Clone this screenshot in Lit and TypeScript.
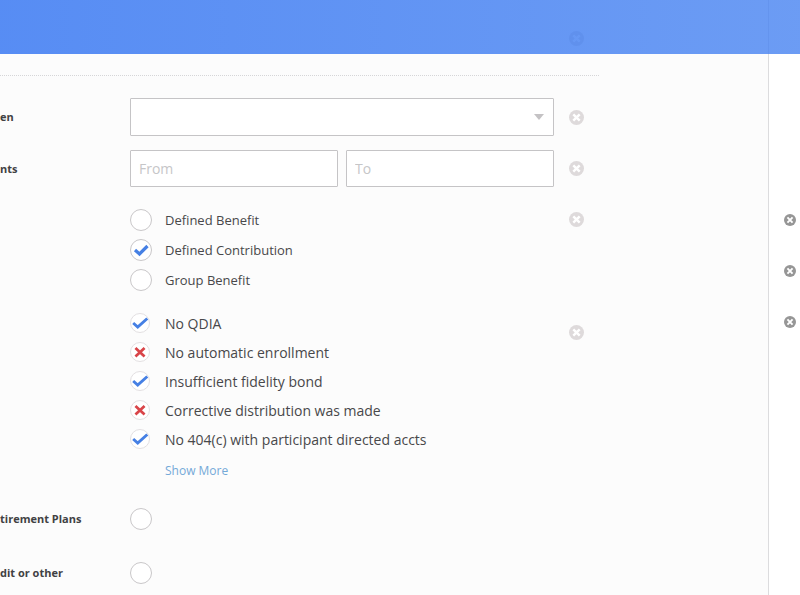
import { LitElement, html, css, svg } from "lit";
import { customElement, property } from "lit/decorators.js";

type Mark = "none" | "check" | "cross";

@customElement("clear-button")
class ClearButton extends LitElement {
  @property() label = "Clear";
  static styles = css`
    :host { display: block; width: 15px; height: 15px; color: #dedadb; }
    .btn { display: block; width: 100%; height: 100%; padding: 0; border: 0; background: none; color: inherit; cursor: pointer; }
    .icon { display: block; width: 100%; height: 100%; }
  `;
  render() {
    return html`<button class="btn" type="button" aria-label=${this.label}>
      <svg class="icon" viewBox="0 0 15 15" aria-hidden="true">
        <circle cx="7.5" cy="7.5" r="7.5" fill="currentColor" />
        <path d="M4.3 4.3l6.4 6.4M10.7 4.3l-6.4 6.4" stroke="#fff" stroke-width="2.4" />
      </svg>
    </button>`;
  }
}

@customElement("mark-option")
class MarkOption extends LitElement {
  @property() label = "";
  @property() name = "";
  @property() mark: Mark = "none";
  @property({ type: Boolean, reflect: true }) compact = false;
  static styles = css`
    :host { display: block; --size: 22px; font-size: 13px; }
    :host([compact]) { --size: 20px; --ring: #e3e0e2; font-size: 14px; }
    .option { display: flex; align-items: center; height: var(--size); color: #48484a; white-space: nowrap; }
    .box { display: grid; width: 35px; flex: none; }
    .input, .glyph { grid-area: 1 / 1; width: var(--size); height: var(--size); }
    .input { appearance: none; box-sizing: border-box; margin: 0; border: 1px solid var(--ring, #c9c7c9); border-radius: 50%; background: #fff; }
    .glyph { pointer-events: none; fill: none; }
  `;
  render() {
    const big = this.compact;
    const shape =
      this.mark === "check"
        ? svg`<path d=${big ? "M3.5 11l5 4.5L19 6" : "M5 11l4.5 4L17.500 7"} stroke="#4680e4" stroke-width="3.2" />`
        : this.mark === "cross"
          ? svg`<path d="M6 6.500l10 9.500M16 6.500l-10 9.500" stroke="#d94448" stroke-width="3" />`
          : null;
    return html`<label class="option">
      <span class="box">
        <input class="input" type="checkbox" aria-label=${this.label || this.name} .checked=${this.mark !== "none"} />
        <svg class="glyph" viewBox="0 0 22 22" aria-hidden="true">${shape}</svg>
      </span>
      <span>${this.label}</span>
    </label>`;
  }
}

const plans: { label: string; mark: Mark }[] = [
  { label: "Defined Benefit", mark: "none" },
  { label: "Defined Contribution", mark: "check" },
  { label: "Group Benefit", mark: "none" },
];

const flags: { label: string; mark: Mark }[] = [
  { label: "No QDIA", mark: "check" },
  { label: "No automatic enrollment", mark: "cross" },
  { label: "Insufficient fidelity bond", mark: "check" },
  { label: "Corrective distribution was made", mark: "cross" },
  { label: "No 404(c) with participant directed accts", mark: "check" },
];

@customElement("app-root")
class AppRoot extends LitElement {
  static styles = css`
    :host { display: block; min-height: 100vh; background: #fff; font-family: "Open Sans", "Noto Sans", sans-serif; color: #48484a; }
    .bar { position: fixed; top: 0; left: 0; right: 0; z-index: 1; height: 54px; background: linear-gradient(90deg, rgba(45, 112, 241, 0.8), rgba(71, 131, 241, 0.8)); }
    .page { display: flex; min-height: 100vh; }
    .filters { flex: 1; background: #fcfcfc; border-right: 1px solid #dcdcde; }
    .previous, .form { width: 78%; max-width: 600px; box-sizing: border-box; padding-right: 15px; }
    .previous { display: grid; justify-content: end; padding-top: 31px; padding-bottom: 29px; }
    .form { padding-top: 22px; border-top: 1px dotted #d6d6d8; }
    .row { display: grid; grid-template-columns: 115px 1fr 15px; column-gap: 15px; align-items: center; margin-bottom: 14px; }
    .name { font-size: 11px; line-height: 16px; font-weight: 700; color: #414143; white-space: nowrap; }
    .picker { display: grid; align-items: center; height: 38px; }
    .select, .arrow { grid-area: 1 / 1; }
    .select, .text { appearance: none; box-sizing: border-box; width: 100%; min-width: 0; border: 1px solid #c5c4c6; border-radius: 1px; background: #fff; font: inherit; font-size: 14px; color: #48484a; padding: 0 8px; }
    .select { height: 38px; }
    .arrow { justify-self: end; margin-right: 10px; width: 10px; height: 6px; fill: #c4c2c4; pointer-events: none; }
    .range { display: grid; grid-template-columns: 1fr 1fr; gap: 8px; }
    .text { height: 37px; }
    .text::placeholder { color: #c6c6c8; opacity: 1; }
    .row.group { align-items: start; margin-top: 22px; margin-bottom: 22px; }
    .row.group clear-button { margin-top: 3px; }
    .row.flags clear-button { margin-top: 12px; }
    .list { display: grid; gap: 8px; }
    .list.tight { gap: 9px; }
    .more { display: block; width: max-content; margin: 14px 0 0 35px; font-size: 12px; line-height: 16px; color: #74a9d8; text-decoration: none; }
    .row.single { margin: 0; padding-top: 7px; padding-bottom: 25px; }
    .row.single:last-child { padding-bottom: 0; }
    .side { width: 31px; box-sizing: border-box; padding: 214px 3px 0 15px; display: flex; flex-direction: column; gap: 39px; }
    .side clear-button { width: 12px; height: 12px; color: #969696; }
  `;
  render() {
    return html`
      <header class="bar"></header>
      <div class="page">
        <main class="filters">
          <div class="previous"><clear-button></clear-button></div>
          <form class="form">
            <div class="row">
              <label class="name" for="choice">en</label>
              <div class="picker">
                <select class="select" id="choice"><option></option></select>
                <svg class="arrow" viewBox="0 0 10 6" aria-hidden="true"><path d="M0 0h10L5 6z" /></svg>
              </div>
              <clear-button></clear-button>
            </div>
            <div class="row">
              <label class="name" for="from">nts</label>
              <div class="range">
                <input class="text" id="from" placeholder="From" />
                <input class="text" aria-label="To" placeholder="To" />
              </div>
              <clear-button></clear-button>
            </div>
            <div class="row group">
              <span></span>
              <div class="list">
                ${plans.map((o) => html`<mark-option .label=${o.label} .mark=${o.mark}></mark-option>`)}
              </div>
              <clear-button></clear-button>
            </div>
            <div class="row group flags">
              <span></span>
              <div>
                <div class="list tight">
                  ${flags.map((o) => html`<mark-option compact .label=${o.label} .mark=${o.mark}></mark-option>`)}
                </div>
                <a class="more" href="#">Show More</a>
              </div>
              <clear-button></clear-button>
            </div>
            <div class="row single">
              <span class="name">tirement Plans</span>
              <mark-option name="tirement Plans"></mark-option>
            </div>
            <div class="row single">
              <span class="name">dit or other</span>
              <mark-option name="dit or other"></mark-option>
            </div>
          </form>
        </main>
        <aside class="side">
          <clear-button label="Remove"></clear-button>
          <clear-button label="Remove"></clear-button>
          <clear-button label="Remove"></clear-button>
        </aside>
      </div>
    `;
  }
}
